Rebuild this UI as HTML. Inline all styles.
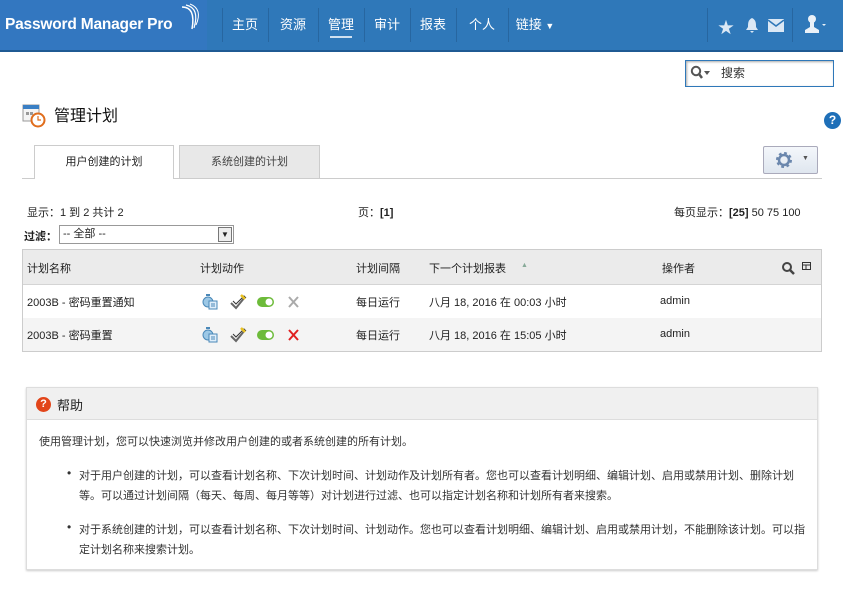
<!DOCTYPE html>
<html><head><meta charset="utf-8"><style>
*{box-sizing:border-box;margin:0;padding:0}
body{width:843px;height:610px;background:#fff;font-family:"Liberation Sans","Noto Sans CJK SC",sans-serif;font-size:12px;color:#222;position:relative;overflow:hidden}
.abs{position:absolute}
#hdr{left:0;top:0;width:843px;height:52px;background:#2f78b9;border-bottom:2px solid #1f5a93}
#logo{left:0;top:0;width:207px;height:50px;background:#3377c0;color:#fff;font-weight:bold;font-size:15.5px;letter-spacing:-0.2px;line-height:50px;padding-left:5px}
.nav{top:0;height:50px;line-height:50px;color:#fff;font-size:13px;text-align:center}
.sep{top:8px;height:34px;border-left:1px solid #2766a0}
</style></head><body>
<div id="hdr" class="abs"></div>
<div id="logo" class="abs">Password Manager Pro
<svg class="abs" style="left:172px;top:3px" width="30" height="30" viewBox="0 0 30 30"><path d="M10 4 Q24 4 20 26" stroke="#fff" stroke-width="1.5" fill="none"/><path d="M14 2 Q28 5 22 25" stroke="#fff" stroke-width="1.2" fill="none"/><path d="M18 1 Q31 6 24 22" stroke="#fff" stroke-width="1" fill="none"/></svg></div>
<div class="abs sep" style="left:222px"></div>
<div class="abs nav" style="left:222px;width:46px">主页</div>
<div class="abs sep" style="left:268px"></div>
<div class="abs nav" style="left:268px;width:50px">资源</div>
<div class="abs sep" style="left:318px"></div>
<div class="abs nav" style="left:318px;width:46px">管理<div class="abs" style="left:12px;top:36px;width:22px;height:2px;background:#cfe0f0"></div></div>
<div class="abs sep" style="left:364px"></div>
<div class="abs nav" style="left:364px;width:46px">审计</div>
<div class="abs sep" style="left:410px"></div>
<div class="abs nav" style="left:410px;width:46px">报表</div>
<div class="abs sep" style="left:456px"></div>
<div class="abs nav" style="left:456px;width:52px">个人</div>
<div class="abs sep" style="left:508px"></div>
<div class="abs nav" style="left:508px;width:54px">链接 <span style="font-size:9px">▼</span></div>
<div class="abs sep" style="left:707px"></div>
<div class="abs" style="left:718px;top:14px;color:#dbe8f5;font-size:16px">★</div>
<svg class="abs" style="left:744px;top:17px" width="16" height="16" viewBox="0 0 16 16"><path d="M8 1 C4 3 4 6 4 10 L2 13 H14 L12 10 C12 6 12 3 8 1Z M6 14 H10 L8 16Z" fill="#dbe8f5"/></svg>
<svg class="abs" style="left:768px;top:19px" width="16" height="13" viewBox="0 0 16 13"><rect width="16" height="13" fill="#dbe8f5"/><path d="M0 1 L8 7 L16 1" stroke="#2f78b9" stroke-width="1.5" fill="none"/></svg>
<div class="abs sep" style="left:792px"></div>
<svg class="abs" style="left:805px;top:14px" width="24" height="20" viewBox="0 0 24 20"><circle cx="7" cy="5" r="4" fill="#eaf1f8"/><path d="M5 8 H9 V13 L14 16 V19 H0 V16 L5 13Z" fill="#eaf1f8"/><path d="M17 10 L21 10 L19 12Z" fill="#eaf1f8"/></svg>

<div class="abs" style="left:685px;top:60px;width:149px;height:27px;border:1px solid #2f78b9;box-shadow:inset 1px 1px 2px #aaa;background:#fff"></div>
<svg class="abs" style="left:690px;top:65px" width="20" height="16" viewBox="0 0 20 16"><circle cx="6" cy="6" r="4.2" stroke="#555" stroke-width="2" fill="none"/><path d="M9 9 L12 13" stroke="#555" stroke-width="2.5"/><path d="M14 6 L20 6 L17 10Z" fill="#555"/></svg>
<div class="abs" style="left:721px;top:64px;font-size:12px;color:#333">搜索</div>

<svg class="abs" style="left:22px;top:102px" width="24" height="26" viewBox="0 0 24 26"><rect x="1" y="3" width="16" height="16" fill="#f4f4f4" stroke="#999"/><rect x="1" y="3" width="16" height="4" fill="#3a7fc4"/><path d="M4 10h3v3H4zM8 10h3v3H8z" fill="#999"/><circle cx="16" cy="18" r="6.5" fill="#fff" stroke="#e06d1c" stroke-width="2"/><path d="M16 14 V18 H19" stroke="#e06d1c" stroke-width="1.2" fill="none"/></svg>
<div class="abs" style="left:54px;top:102px;font-size:16px;color:#111">管理计划</div>
<div class="abs" style="left:824px;top:112px;width:17px;height:17px;border-radius:50%;background:#1e6fb8;color:#fff;font-weight:bold;font-size:12px;text-align:center;line-height:17px">?</div>

<div class="abs" style="left:22px;top:178px;width:800px;border-top:1px solid #ccc"></div>
<div class="abs" style="left:34px;top:145px;width:140px;height:34px;border:1px solid #ccc;border-bottom:none;background:#fff;text-align:center;line-height:32px;font-size:11px">用户创建的计划</div>
<div class="abs" style="left:179px;top:145px;width:141px;height:33px;border:1px solid #ccc;border-bottom:none;background:#e8e8e8;text-align:center;line-height:32px;font-size:11px;color:#444">系统创建的计划</div>
<div class="abs" style="left:763px;top:146px;width:55px;height:28px;border:1px solid #aab;background:linear-gradient(#f4f7fb,#dfe6ef);border-radius:2px"></div>
<svg class="abs" style="left:775px;top:151px" width="18" height="18" viewBox="0 0 18 18"><circle cx="9" cy="9" r="6" fill="none" stroke="#6b87ad" stroke-width="4" stroke-dasharray="2.4 2.3"/><circle cx="9" cy="9" r="5" fill="none" stroke="#6b87ad" stroke-width="2.5"/></svg>
<div class="abs" style="left:802px;top:155px;font-size:7px;color:#555">▼</div>

<div class="abs" style="left:27px;top:204px;font-size:11px">显示：1 到 2 共计 2</div>
<div class="abs" style="left:358px;top:204px;font-size:11px">页：<b>[1]</b></div>
<div class="abs" style="left:674px;top:204px;font-size:11px">每页显示：<b>[25]</b> 50 75 100</div>
<div class="abs" style="left:24px;top:228px;font-size:11px;font-weight:bold">过滤：</div>
<div class="abs" style="left:59px;top:225px;width:175px;height:19px;border:1px solid #999;font-size:11px;line-height:17px;padding-left:3px">-- 全部 --<div class="abs" style="right:1px;top:1px;width:14px;height:15px;border:1px solid #777;background:#eee;font-size:8px;text-align:center;line-height:14px">▼</div></div>

<div class="abs" style="left:22px;top:249px;width:800px;height:103px;border:1px solid #ccc"></div>
<div class="abs" style="left:23px;top:250px;width:798px;height:35px;background:#ebebeb;border-bottom:1px solid #d4d4d4"></div>
<div class="abs" style="left:23px;top:318px;width:798px;height:33px;background:#f4f4f4"></div>
<div class="abs" style="left:27px;top:260px;font-size:11px">计划名称</div>
<div class="abs" style="left:200px;top:260px;font-size:11px">计划动作</div>
<div class="abs" style="left:356px;top:260px;font-size:11px">计划间隔</div>
<div class="abs" style="left:429px;top:260px;font-size:11px">下一个计划报表</div>
<div class="abs" style="left:521px;top:262px;font-size:7px;color:#8a9">▲</div>
<div class="abs" style="left:662px;top:260px;font-size:11px">操作者</div>
<svg class="abs" style="left:781px;top:261px" width="16" height="14" viewBox="0 0 16 14"><circle cx="6" cy="6" r="4" stroke="#444" stroke-width="2" fill="none"/><path d="M9 9 L13 13" stroke="#444" stroke-width="2.5"/></svg>
<svg class="abs" style="left:802px;top:262px" width="10" height="10" viewBox="0 0 10 10"><rect x="0.5" y="0.5" width="8" height="7" fill="none" stroke="#333"/><path d="M0 3h9M4 3v5" stroke="#333"/></svg>

<div class="abs" style="left:27px;top:294px;font-size:11px">2003B - 密码重置通知</div>
<div class="abs" style="left:27px;top:327px;font-size:11px">2003B - 密码重置</div>
<div class="abs" style="left:356px;top:294px;font-size:11px">每日运行</div>
<div class="abs" style="left:356px;top:327px;font-size:11px">每日运行</div>
<div class="abs" style="left:429px;top:294px;font-size:11px">八月 18, 2016 在 00:03 小时</div>
<div class="abs" style="left:429px;top:327px;font-size:11px">八月 18, 2016 在 15:05 小时</div>
<div class="abs" style="left:660px;top:295px;font-size:11px">admin</div>
<div class="abs" style="left:660px;top:328px;font-size:11px">admin</div>

<svg class="abs" style="left:200px;top:293px" width="110" height="52" viewBox="0 0 110 52">
<g id="r"><circle cx="8" cy="9" r="5" fill="#9cc8e6" stroke="#4a88b8"/><rect x="6" y="1" width="4" height="2" fill="#4a88b8"/><rect x="9" y="8" width="8" height="8" fill="#dfeefa" stroke="#4a88b8"/><path d="M11 11h4M11 13h4" stroke="#4a88b8"/>
<path d="M31 10 L36 15 L45 4" stroke="#666" stroke-width="2" fill="none"/><path d="M33 8 L36 11 L44 3 L46 5" stroke="#333" fill="none"/><path d="M41 2 L45 6" stroke="#e8c020" stroke-width="2.5"/>
<rect x="57" y="4" width="17" height="10" rx="5" fill="#6dbb3a"/><circle cx="69" cy="9" r="3.5" fill="#fff"/></g>
<path d="M89 4 L98 14 M98 4 L89 14" stroke="#aaa" stroke-width="2"/>
<use href="#r" y="33"/>
<path d="M89 37 L98 47 M98 37 L89 47" stroke="#e02020" stroke-width="2"/>
</svg>

<div class="abs" style="left:26px;top:387px;width:792px;height:183px;border:1px solid #ddd;box-shadow:0 1px 2px #ccc"></div>
<div class="abs" style="left:27px;top:388px;width:790px;height:32px;background:#f0f0f0;border-bottom:1px solid #ddd"></div>
<div class="abs" style="left:36px;top:397px;width:15px;height:15px;border-radius:50%;background:#e2451a;color:#fff;font-size:11px;font-weight:bold;text-align:center;line-height:15px">?</div>
<div class="abs" style="left:57px;top:395px;font-size:13px">帮助</div>
<div class="abs" style="left:39px;top:433px;font-size:11px;color:#333">使用管理计划，您可以快速浏览并修改用户创建的或者系统创建的所有计划。</div>
<div class="abs" style="left:67px;top:466px;font-size:12px;color:#333">•</div>
<div class="abs" style="left:79px;top:466px;width:730px;font-size:11px;color:#333;line-height:20px">对于用户创建的计划，可以查看计划名称、下次计划时间、计划动作及计划所有者。您也可以查看计划明细、编辑计划、启用或禁用计划、删除计划等。可以通过计划间隔（每天、每周、每月等等）对计划进行过滤、也可以指定计划名称和计划所有者来搜索。</div>
<div class="abs" style="left:67px;top:520px;font-size:12px;color:#333">•</div>
<div class="abs" style="left:79px;top:520px;width:730px;font-size:11px;color:#333;line-height:20px">对于系统创建的计划，可以查看计划名称、下次计划时间、计划动作。您也可以查看计划明细、编辑计划、启用或禁用计划，不能删除该计划。可以指定计划名称来搜索计划。</div>
</body></html>
